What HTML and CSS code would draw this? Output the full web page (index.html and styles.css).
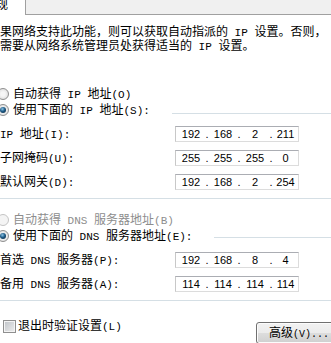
FILE: index.html
```html
<!DOCTYPE html>
<html lang="zh-CN">
<head>
  <meta charset="UTF-8">
  <title>Internet 协议版本 4 (TCP/IPv4) 属性</title>
  <link rel="stylesheet" href="styles.css">
</head>
<body>
<div class="tabs">
  <span class="tab-label">规</span>
  <div class="tab-strip"></div>
</div>

<p class="intro">果网络支持此功能，则可以获取自动指派的<b> IP </b>设置。否则，<br>需要从网络系统管理员处获得适当的<b> IP </b>设置。</p>

<div class="radio-row">
  <span class="radio"></span><span>自动获得<b> IP </b>地址<b>(O)</b></span>
</div>
<div class="group">
  <div class="radio-row legend">
    <span class="radio checked"></span><span>使用下面的<b> IP </b>地址<b>(S):</b></span><span class="rule"></span>
  </div>
  <div class="field">
    <label><b>IP </b>地址<b>(I):</b></label>
    <div class="ip"><span>192</span><i>.</i><span>168</span><i>.</i><span>2</span><i>.</i><span>211</span></div>
  </div>
  <div class="field">
    <label>子网掩码<b>(U):</b></label>
    <div class="ip"><span>255</span><i>.</i><span>255</span><i>.</i><span>255</span><i>.</i><span>0</span></div>
  </div>
  <div class="field">
    <label>默认网关<b>(D):</b></label>
    <div class="ip"><span>192</span><i>.</i><span>168</span><i>.</i><span>2</span><i>.</i><span>254</span></div>
  </div>
</div>

<div class="radio-row disabled dns-auto">
  <span class="radio"></span><span>自动获得<b> DNS </b>服务器地址<b>(B)</b></span>
</div>
<div class="group">
  <div class="radio-row legend legend-dns">
    <span class="radio checked"></span><span>使用下面的<b> DNS </b>服务器地址<b>(E):</b></span><span class="rule"></span>
  </div>
  <div class="field">
    <label>首选<b> DNS </b>服务器<b>(P):</b></label>
    <div class="ip"><span>192</span><i>.</i><span>168</span><i>.</i><span>8</span><i>.</i><span>4</span></div>
  </div>
  <div class="field">
    <label>备用<b> DNS </b>服务器<b>(A):</b></label>
    <div class="ip"><span>114</span><i>.</i><span>114</span><i>.</i><span>114</span><i>.</i><span>114</span></div>
  </div>
</div>

<div class="footer">
  <label class="check-row"><span class="checkbox"></span><span>退出时验证设置<b>(L)</b></span></label>
  <button class="btn">高级<b>(V)...</b></button>
</div>
</body>
</html>
```

FILE: styles.css
```css
*, *::before, *::after {
  box-sizing: border-box;
}

body {
  margin: 0;
  width: 331px;
  height: 343px;
  overflow: hidden;
  background: #fff;
  color: #000;
  font-family: "Noto Sans CJK SC", sans-serif;
  font-size: 12px;
  line-height: 16px;
}

/* latin runs: half-width like SimSun */
b {
  font-family: "Liberation Mono", monospace;
  font-size: 11px;
  font-weight: normal;
  white-space: pre;
}

/* tab strip cut off at the top */
.tabs {
  display: flex;
  height: 15px;
}
.tab-label {
  margin-left: -4px;
  margin-top: -2px;
  line-height: 12px;
}
.tab-strip {
  flex: 1;
  margin-left: 17px;
  height: 15px;
  background: #f0f0f0;
  border-left: 1px solid #a0a0a0;
  border-bottom: 1px solid #a0a0a0;
}

.intro {
  margin: 10px 0 0;
  line-height: 12px;
  white-space: nowrap;
}

.radio-row {
  display: flex;
  align-items: center;
  height: 16px;
  white-space: nowrap;
}
.intro + .radio-row {
  margin-top: 33px;
}
.radio {
  position: relative;
  flex: none;
  width: 12px;
  height: 12px;
  margin-left: -3px;
  margin-right: 4px;
  border: 1px solid #8f8f8f;
  border-radius: 50%;
  background: radial-gradient(circle at 50% 50%, #f6f6f6 30%, #d4d4d4 100%);
}
.radio.checked::after {
  content: "";
  position: absolute;
  left: 2px;
  top: 2px;
  width: 6px;
  height: 6px;
  border-radius: 50%;
  background: radial-gradient(circle at 40% 35%, #8cc4e6 0, #1d5a86 45%, #0b1f33 100%);
}
.disabled {
  color: #8d8d8d;
}
.disabled .radio {
  border-color: #c4c4c4;
  background: #f4f4f4;
}
.dns-auto {
  margin-top: 13px;
}

.rule {
  flex: 1;
  align-self: flex-start;
  height: 1px;
  margin-left: 22px;
  margin-top: 11px;
  background: #d5dfe5;
}
.legend-dns .rule {
  margin-top: 9px;
}

.group {
  padding-bottom: 8px;
  border-bottom: 1px solid #d5dfe5;
}
.group:last-of-type {
  padding-bottom: 7px;
}

.field {
  display: flex;
  align-items: center;
  height: 16px;
  margin-top: 8px;
  white-space: nowrap;
}
.field label {
  width: 175px;
  flex: none;
}

.ip {
  display: flex;
  width: 124px;
  height: 16px;
  padding-left: 1px;
  border: 1px solid;
  border-color: #abadb3 #dcdcdc #dcdcdc #c8c8c8;
  background: #fff;
  font-family: "Liberation Sans", sans-serif;
  font-size: 11px;
  line-height: 14px;
}
.ip span {
  width: 28px;
  text-align: center;
}
.ip span:last-child {
  flex: 1;
}
.ip i {
  width: 4px;
  font-style: normal;
  text-align: center;
}

.footer {
  display: flex;
  justify-content: space-between;
  align-items: flex-start;
  margin-top: 18px;
}
.check-row {
  display: flex;
  align-items: center;
  height: 14px;
  white-space: nowrap;
}
.checkbox {
  width: 13px;
  height: 13px;
  margin-left: 3px;
  margin-right: 2px;
  border: 1px solid #8f8f8f;
  box-shadow: inset 0 0 0 1px #f4f4f4;
  background: linear-gradient(135deg, #bfc3c8, #eeeeee);
}

.btn {
  width: 90px;
  height: 22px;
  margin-top: 3px;
  margin-right: -15px;
  padding: 0 0 0 12px;
  text-align: left;
  white-space: nowrap;
  font: inherit;
  line-height: 18px;
  color: #000;
  border: 1px solid #707070;
  border-radius: 3px;
  background: linear-gradient(#f2f2f2 0, #ebebeb 50%, #dddddd 50%, #cfcfcf 100%);
  box-shadow: inset 0 0 0 1px #fcfcfc;
}
.btn b {
  font-size: 10px;
}
```
